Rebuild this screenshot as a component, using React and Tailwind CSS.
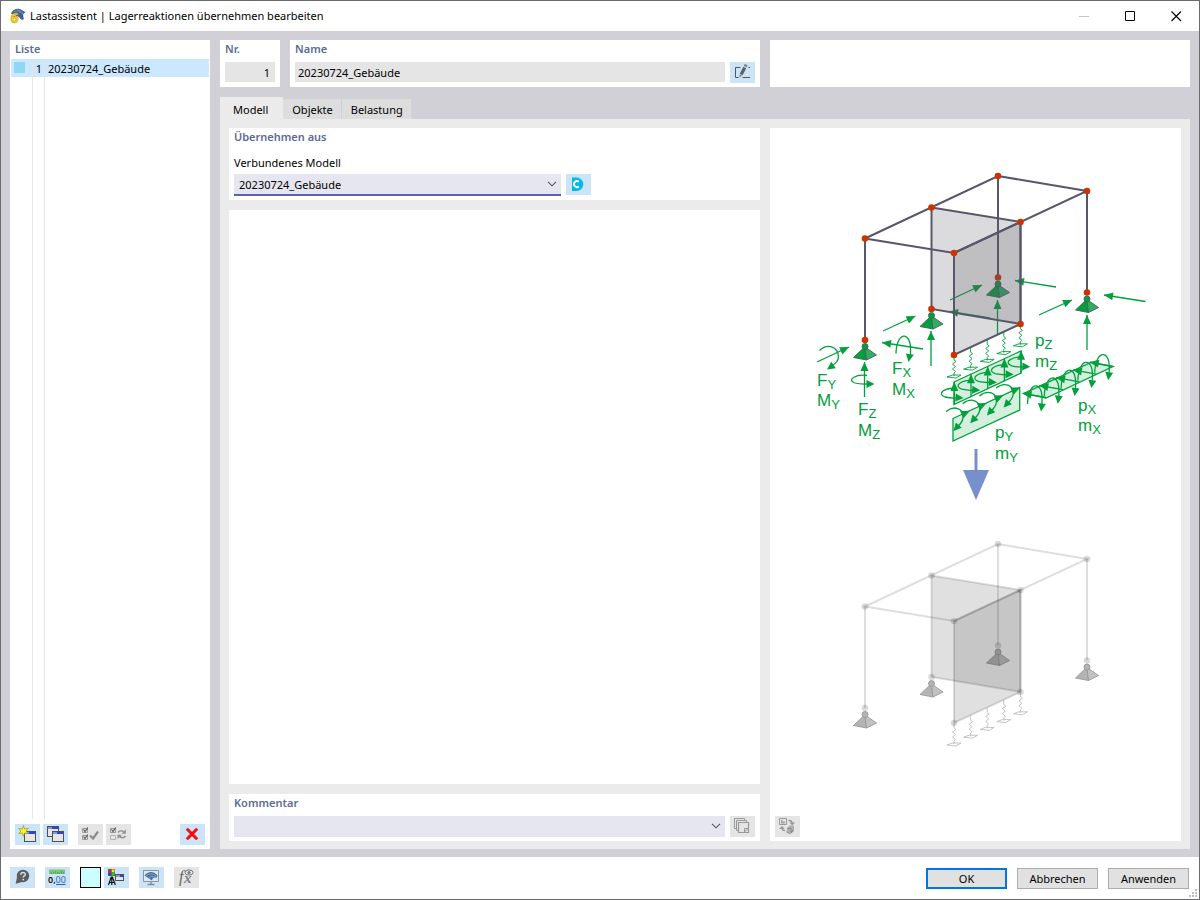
import { useState } from "react";
import clsx from "clsx";

const GREEN = "#00a03c";

/* ---------- small controls ---------- */

function ToolButton({ label, disabled, children }) {
  return (
    <button
      type="button"
      aria-label={label}
      disabled={disabled}
      className={clsx("block h-[21px] w-[25px] shrink-0", disabled ? "bg-[#e5e5e5]" : "bg-[#cce4f7]")}
    >
      <svg viewBox="0 0 25 21" className="h-[21px] w-[25px] overflow-visible" fill="none">
        {children}
      </svg>
    </button>
  );
}

function Caption({ htmlFor, children }) {
  const cls = "block text-[11px] leading-[18px] font-semibold text-[#5c6b94]";
  return htmlFor ? <label htmlFor={htmlFor} className={cls}>{children}</label> : <h2 className={cls}>{children}</h2>;
}

function Chevron() {
  return (
    <svg viewBox="0 0 10 6" className="pointer-events-none absolute top-[7px] right-[4px] h-[6px] w-[10px]" fill="none" stroke="#555" strokeWidth="1.1">
      <path d="M1 .8 5 4.800 9 .8" />
    </svg>
  );
}

function DialogButton({ primary, children }) {
  return (
    <button
      type="button"
      className={clsx("h-[21px] w-[81px] bg-[#e1e1e1] text-[11px] leading-none", primary ? "border-2 border-[#0078d7]" : "border border-[#adadad]")}
    >
      {children}
    </button>
  );
}

/* ---------- icons ---------- */

function MiniWindow({ x, y, w = 11, h = 11 }) {
  return (
    <g transform={`translate(${x} ${y})`}>
      <rect x=".5" y=".5" width={w - 1} height={h - 1} fill="#e6e6e6" stroke="#505050" />
      <path d={`M1 2H${w - 1}`} stroke="#2c3fe0" strokeWidth="2" />
      <path d="M1 2H5" stroke="#7d9ccb" strokeWidth="2" />
    </g>
  );
}

const NewIcon = () => (
  <>
    <MiniWindow x={9} y={7} w={12} />
    <path d="M8.500 1.500 9.600 5l3.700-.6L11 7l2.400 2.600-3.700-.6-1.200 3.300L7.200 9l-3.400.6L6 7 3.700 4.400l3.700.6Z" fill="#fff21a" stroke="#8a8430" strokeWidth=".6" />
  </>
);

const CopyIcon = () => (
  <>
    <MiniWindow x={4} y={2} w={12} />
    <MiniWindow x={9} y={7} w={12} />
  </>
);

const CheckAllIcon = () => (
  <>
    <path d="M4.500 4.500h5v4h-5zM4.500 11.500h5v4h-5z" stroke="#9a9a9a" />
    <path d="m5.500 5.500 1.500 2L9.800 3.500M5.500 12.500l1.500 2 2.800-4" stroke="#555" strokeWidth="1.100" />
    <path d="m12 11.500 3 3 5-7" stroke="#8c8c8c" strokeWidth="2.200" />
  </>
);

const InvertIcon = () => (
  <>
    <path d="M4.500 4.500h5v4h-5z" stroke="#9a9a9a" />
    <path d="M4.500 11.500h5v4h-5z" stroke="#b4b4b4" />
    <path d="m5.500 5.500 1.500 2L9.800 3.500" stroke="#555" strokeWidth="1.100" />
    <path d="M12 8.500c1.500-2 4-2 6-.5M19.500 12c-1.500 2-4 2-6 .5" stroke="#909090" strokeWidth="1.600" />
    <path d="M19.800 5.500v4.200h-4.300ZM11.500 15v-4.200h4.300Z" fill="#909090" />
  </>
);

const DeleteIcon = () => <path d="M6.800 4.800 17.200 15.200M17.200 4.800 6.800 15.200" stroke="#fa0a0a" strokeWidth="3" />;

const EditIcon = () => (
  <>
    <path d="M10.500 5.500h-5v10h3M12.500 15.500H20M18.500 5.500H20" stroke="#555" />
    <path d="m14.800 5.500-3.600 7" stroke="#606060" strokeWidth="3.200" />
    <path d="m15.300 4.500.9-1.800" stroke="#777" strokeWidth="3.200" />
    <path d="m9.600 12.200 2.600 1.300-2.900 2.300Z" fill="#888" />
  </>
);

const CloudIcon = () => (
  <>
    <path d="M6 3.500h4.500a6.700 6.700 0 0 1 0 13.500H6Z" fill="#00b9e4" />
    <path d="M12.800 7.700a3 3 0 1 0 0 4.800" stroke="#fff" strokeWidth="2" />
  </>
);

const PagesIcon = () => (
  <g stroke="#999">
    <path d="M4.500 12.500v-10h10M6.500 14.500v-10h10" />
    <path d="M4.500 12.500h2M6.500 14.500h2M14.500 2.500v2M16.500 4.500v2" />
    <path d="M8.500 6.500h10v10h-10z" strokeWidth="1.200" />
    <path d="M14.500 16v-3.500H18M14.500 16l3.500-3.500" />
  </g>
);

const SwapIcon = () => (
  <>
    <path d="M4.500 2.500h7v6h-7z" stroke="#999" />
    <path d="M6 4h1.500v1.500H10V7.500H6Z" fill="#a5a5a5" />
    <path d="M13.500 4.500c2.500 0 4 .5 3.500 3.500M7 11c-.5 2.500 1 3.500 3 3.500" stroke="#999" strokeWidth="1.400" />
    <path d="M14.500 6.500h5.500L17.200 9.500ZM4.200 13 7 10l2.800 3Z" fill="#999" />
    <path d="m12 12 2.500-2.500h4.500v4.500l-2.500 3.500-5-1.500Z" fill="#b0b0b0" />
    <path d="m12.500 12.500 3.500-.5v4l2.500-2.500M11.500 16l3 1.500 4-2.500" stroke="#8c8c8c" />
  </>
);

const HelpIcon = () => (
  <>
    <circle cx="13" cy="9" r="6.200" fill="#5c5c5c" />
    <path d="m7 10-1.300 6.700L12 15Z" fill="#5c5c5c" />
    <path d="M10.800 7.700c0-3 4.700-2.800 4.500-.2-.1 1.400-2.100 1.500-2.100 3" stroke="#cce4f7" strokeWidth="1.500" />
    <circle cx="13.200" cy="12.600" r=".9" fill="#cce4f7" />
  </>
);

const UnitsIcon = () => (
  <>
    <path d="M4 2.500h16v4.500H4Z" fill="#7cc47a" />
    <path d="M6.500 7V5M8.500 7V5M10.500 7V4M12.500 7V5M14.500 7V5M16.500 7V4M18.500 7V5" stroke="#4e9e52" strokeWidth=".7" />
    <text x="3" y="16" fontSize="9" fontWeight="600" fill="#111">0,</text>
    <text x="10.500" y="16" fontSize="9" fill="#2f62bd">00</text>
    <path d="M11 17.500h9.500" stroke="#2f62bd" />
  </>
);

const DisplayIcon = () => (
  <>
    <path d="M4 2h7v7H4z" fill="#666" />
    <path d="M4.500 2.500h2.700v2.700H4.500z" fill="#f01818" />
    <path d="M7.800 2.500h2.700v2.700H7.800z" fill="#ffe600" />
    <path d="M4.500 5.800h2.700v2.700H4.500z" fill="#2838e0" />
    <path d="M7.800 5.800h2.700v2.700H7.800z" fill="#25c52b" />
    <path d="M4.500 18 7.200 10h1.200l3 8M5 15.500h6M7.800 10v8" stroke="#111" strokeWidth="1.200" />
    <MiniWindow x={11} y={7} w={9} h={7} />
  </>
);

const MonitorIcon = () => (
  <>
    <path d="M4.500 3.500h15v11h-15z" stroke="#8f959b" fill="#dce9f3" />
    <path d="M12 15v2.500M8.500 17.500h7" stroke="#848b92" strokeWidth="1.400" />
    <path d="M5.500 8.500C9 4 14.500 3.500 18.500 8.500L17.500 11c-2-1-4-.5-4.500 2.500Z" fill="#41749f" />
    <path d="M7 9c4-3 7-3 10.500.5M10 11c2-2 4-2 6.500-.5" stroke="#9fbad0" strokeWidth=".7" />
  </>
);

const FormulaIcon = () => (
  <>
    <text x="5" y="15" fontSize="16" fontStyle="italic" fontFamily="Liberation Serif, serif" fill="#666">f</text>
    <text x="10" y="16" fontSize="15" fontStyle="italic" fontWeight="700" fontFamily="Liberation Serif, serif" fill="#808080">x</text>
    <ellipse cx="15" cy="5.500" rx="4" ry="2.600" stroke="#777" />
    <circle cx="15" cy="5.500" r="1.500" fill="#777" />
  </>
);

const AppIcon = () => (
  <svg viewBox="0 0 16 16" className="size-4 overflow-visible" aria-hidden="true">
    <path d="M2 5.500C3.500 2 8-.5 12 1.500l4.500 2.800-2.500 2 .8 5C13 12.500 11 11 10 9Z" fill="#41628e" />
    <path d="M5 4c3-2 5.500-2 8.500.5M8 1.500c2 2 4 3.500 6.500 4.500" stroke="#8ba5c4" strokeWidth=".7" fill="none" />
    <text x="1.500" y="15" fontSize="14" fontWeight="800" fill="#f6cf1c" stroke="#9a861e" strokeWidth=".4">6</text>
  </svg>
);

/* ---------- illustration ---------- */

const NODES = [[865, 238.500], [931.500, 207.500], [998, 176], [1087, 191], [1020.500, 222], [954, 253]];
const FEET = [[865, 340], [931.500, 309], [998, 277.500], [1087, 292.500], [1020.500, 324], [954, 355]];
const STEPS = [0, 1, 2, 3, 4];

const FULL = {
  line: "#57566a", plate: "#5c5a66", plateOpacity: 0.22, node: "#cc3300", nodeOpacity: 1,
  face: "#00a03f", faceLight: "#2fae62", outline: "#4e5a5c", spring: GREEN, lineOpacity: 1, width: 2,
};
const GHOST = {
  line: "#000", plate: "#3d3d3d", plateOpacity: 0.16, node: "#000", nodeOpacity: 0.14,
  face: "#b4b4b4", faceLight: "#c2c2c2", outline: "#9a9a9a", spring: "#bdbdbd", lineOpacity: 0.13, width: 2,
};

function Support({ x, y, c }) {
  return (
    <g transform={`translate(${x} ${y})`} stroke={c.outline} strokeWidth=".9" strokeLinejoin="round">
      <path d="M-1.500 8-11.500 17.500 1.500 20 0 8Z" fill={c.face} />
      <path d="M0 8 1.500 20 11.500 15 1.500 8Z" fill={c.faceLight} />
      <circle cy="6.500" r="3" fill={c.face} />
    </g>
  );
}

function Spring({ x, y, c }) {
  return (
    <path
      transform={`translate(${x} ${y})`}
      d="M0 0V5L2 6.500-1.500 9 1.500 11.500-1.500 14 1.500 16.500 0 18V21M-7 22-1.500 20H7L2 23Z"
      fill="none"
      stroke={c.spring}
      strokeWidth=".9"
    />
  );
}

function Plate({ points, c }) {
  return <polygon points={points.join(" ")} fill={c.plate} fillOpacity={c.plateOpacity} />;
}

function Structure({ c, behind }) {
  const [n0, n1, n2, n3, n4, n5] = NODES;
  const [f0, f1, f2, f3, f4, f5] = FEET;
  return (
    <g>
      <path d={`M${n2}L${f2}`} stroke={c.line} strokeOpacity={c.lineOpacity} strokeWidth={c.width} />
      <Support x={f2[0]} y={f2[1]} c={c} />
      <circle cx={f2[0]} cy={f2[1]} r="3.300" fill={c.node} fillOpacity={c.nodeOpacity} />
      {behind}
      <Plate points={[n1, n4, f4, f1]} c={c} />
      <Plate points={[n5, n4, f4, f5]} c={c} />
      <g stroke={c.line} strokeOpacity={c.lineOpacity} strokeWidth={c.width} fill="none">
        <path d={`M${n0}L${n2}L${n3}L${n5}Z`} />
        <path d={`M${n0}L${f0}M${n3}L${f3}`} />
        <path d={`M${n1}L${n4}L${f4}L${f1}Z`} />
        <path d={`M${n5}L${n4}L${f4}L${f5}Z`} />
      </g>
      {STEPS.map((i) => <Spring key={i} x={954 + i * 16.6} y={355 - i * 7.8} c={c} />)}
      {[...NODES, f0, f1, f3, f4, f5].map(([x, y], i) => (
        <circle key={i} cx={x} cy={y} r="3.300" fill={c.node} fillOpacity={c.nodeOpacity} />
      ))}
      {[f0, f1, f3].map(([x, y]) => <Support key={x} x={x} y={y} c={c} />)}
    </g>
  );
}

function Head({ x, y, angle, size = 9 }) {
  return <path transform={`translate(${x} ${y}) rotate(${angle})`} d={`M0 0L${-size} -4V4Z`} fill={GREEN} />;
}

function Arrow({ from, to, size }) {
  const angle = (Math.atan2(to[1] - from[1], to[0] - from[0]) * 180) / Math.PI;
  return (
    <g>
      <path d={`M${from}L${to}`} stroke={GREEN} strokeWidth="1.300" />
      <Head x={to[0]} y={to[1]} angle={angle} size={size} />
    </g>
  );
}

function Turn({ d, x, y, angle }) {
  return (
    <g>
      <path d={d} fill="none" stroke={GREEN} strokeWidth="1.300" />
      <Head x={x} y={y} angle={angle} size={8} />
    </g>
  );
}

function Label({ x, y, base, sub }) {
  return (
    <text x={x} y={y} fontSize="17" fill={GREEN} fontFamily="Liberation Sans, Arial, sans-serif">
      {base}
      <tspan fontSize="13" dy="3">{sub}</tspan>
    </text>
  );
}

function Loads() {
  return (
    <g>
      <Arrow from={[1039, 315]} to={[1072, 300]} />
      <Arrow from={[1145.500, 301.500]} to={[1104, 295]} />
      <Arrow from={[1087, 350]} to={[1087, 315]} />
      <Arrow from={[883, 331]} to={[915.500, 316]} />
      <Arrow from={[931, 366]} to={[931, 331]} />
      <Arrow from={[817, 362]} to={[849, 347]} />
      <Arrow from={[923, 349]} to={[882, 342.500]} />
      <Arrow from={[864.500, 397]} to={[864.500, 362]} />
      <Turn d="M819.500 350.500C827 343 838 346 838.500 357Q838 362 833 365" x={827} y={369.500} angle={145} />
      <Turn d="M896 353.500C896.500 331 911 331 910.500 350V355" x={908.500} y={362} angle={100} />
      <Turn d="M867 375.500C856 374 846 380 855 383Q860 384.500 868 384" x={874.500} y={384} angle={0} />

      {/* vertical line load */}
      <path d="M954 382 1021 351V373L954 404.500Z" fill={GREEN} fillOpacity=".17" stroke={GREEN} strokeWidth="1.300" />
      {STEPS.map((i) => (
        <g key={i} transform={`translate(${i * 16.7} ${i * -7.8})`}>
          <Arrow from={[954.300, 404.500]} to={[954.300, 382]} />
          <Turn d="M957 388.500C945 387 936 394 945 397Q951 398.500 957 398" x={963.500} y={398} angle={3} />
        </g>
      ))}

      {/* line load in y */}
      <path d="M953 418.500 1019.700 387.500V410L953 441Z" fill={GREEN} fillOpacity=".17" stroke={GREEN} strokeWidth="1.300" />
      {[0, 1, 2, 3].map((i) => (
        <g key={i} transform={`translate(${i * 16.7} ${i * -7.8})`}>
          <Head x={970} y={410.800} angle={-25} />
          <Turn d="M946 411.500C954 405 964 408 963 418Q962 423 958 426" x={953.500} y={431} angle={132} />
        </g>
      ))}

      {/* line load in x */}
      <path d="M1024 393.300 1046 398 1113 366.500 1091 362.500Z" fill={GREEN} fillOpacity=".17" stroke={GREEN} strokeWidth="1.300" />
      {STEPS.map((i) => (
        <g key={i} transform={`translate(${i * 16.8} ${i * -7.8})`}>
          <Arrow from={[1046, 397.500]} to={[1022.500, 393.300]} />
          <Turn d="M1027.500 404C1028 381 1043 380 1042 400V404" x={1041} y={411.500} angle={97} />
        </g>
      ))}

      <Label x={817} y={386} base="F" sub="Y" />
      <Label x={817} y={406} base="M" sub="Y" />
      <Label x={858} y={415} base="F" sub="Z" />
      <Label x={858} y={436} base="M" sub="Z" />
      <Label x={892} y={374} base="F" sub="X" />
      <Label x={892} y={395} base="M" sub="X" />
      <Label x={1035} y={346} base="p" sub="Z" />
      <Label x={1035} y={367} base="m" sub="Z" />
      <Label x={1078} y={411} base="p" sub="X" />
      <Label x={1078} y={431} base="m" sub="X" />
      <Label x={995} y={438} base="p" sub="Y" />
      <Label x={995} y={459} base="m" sub="Y" />
    </g>
  );
}

function Illustration() {
  const hiddenLoads = (
    <g>
      <Arrow from={[950, 300]} to={[982, 285]} />
      <Arrow from={[1056, 287]} to={[1015, 280.500]} />
      <Arrow from={[997.500, 334]} to={[997.500, 300]} />
      <Arrow from={[990, 318]} to={[949, 311.500]} />
    </g>
  );
  return (
    <svg viewBox="770 128 411 680" className="block w-full" role="img" aria-label="Lagerreaktionen">
      <Structure c={FULL} behind={hiddenLoads} />
      <Loads />
      <path d="M976 449V472" stroke="#7590cb" strokeWidth="3" />
      <path d="M963 470H989L976 500Z" fill="#7590cb" />
      <g transform="translate(0 368)">
        <Structure c={GHOST} />
      </g>
    </svg>
  );
}

/* ---------- dialog ---------- */

const TABS = ["Modell", "Objekte", "Belastung"];
const ENTRIES = [{ no: 1, name: "20230724_Gebäude" }];

function TitleBar() {
  return (
    <header className="flex h-[30px] items-center bg-white pl-2">
      <AppIcon />
      <h1 className="ml-[5px] flex-1 text-[11px]">Lastassistent | Lagerreaktionen übernehmen bearbeiten</h1>
      <div className="flex">
        <button type="button" aria-label="Minimieren" disabled className="flex h-[30px] w-[46px] items-center justify-center">
          <svg viewBox="0 0 11 11" className="size-[11px]"><path d="M0 5.500H10" stroke="#c4c4c4" /></svg>
        </button>
        <button type="button" aria-label="Maximieren" className="flex h-[30px] w-[46px] items-center justify-center">
          <svg viewBox="0 0 11 11" className="size-[11px]" fill="none"><path d="M.5 .5h9v9h-9z" stroke="#000" /></svg>
        </button>
        <button type="button" aria-label="Schließen" className="flex h-[30px] w-[46px] items-center justify-center">
          <svg viewBox="0 0 11 11" className="size-[11px]"><path d="M.5 .5 10 10M10 .5 .5 10" stroke="#000" strokeWidth="1.100" /></svg>
        </button>
      </div>
    </header>
  );
}

function ListPanel() {
  return (
    <aside className="flex w-[200px] shrink-0 flex-col bg-white">
      <div className="px-[5px] pb-px"><Caption>Liste</Caption></div>
      <ul className="px-px">
        {ENTRIES.map((entry) => (
          <li key={entry.no} className="grid h-[18px] grid-cols-[22px_12px_1fr] bg-[#cce8ff] text-[11px] leading-[20px]">
            <span className="border-r border-[#e4e4e4] py-[3px] pl-[3px]">
              <span className="block size-[11px] bg-[#8fd8f5]" />
            </span>
            <span className="border-r border-[#e4e4e4] pr-[2px] text-right">{entry.no}</span>
            <span className="pl-[3px]">{entry.name}</span>
          </li>
        ))}
      </ul>
      <div className="mx-px grid flex-1 grid-cols-[22px_12px_1fr]">
        <span className="border-r border-[#e8e8e8]" />
        <span className="border-r border-[#e8e8e8]" />
      </div>
      <div className="flex px-[5px] pt-[5px] pb-1">
        <div className="flex gap-[3px]">
          <ToolButton label="Neu"><NewIcon /></ToolButton>
          <ToolButton label="Kopieren"><CopyIcon /></ToolButton>
        </div>
        <div className="ml-[10px] flex gap-[3px]">
          <ToolButton label="Alle auswählen" disabled><CheckAllIcon /></ToolButton>
          <ToolButton label="Auswahl umkehren" disabled><InvertIcon /></ToolButton>
        </div>
        <div className="ml-auto"><ToolButton label="Löschen"><DeleteIcon /></ToolButton></div>
      </div>
    </aside>
  );
}

function HeaderFields() {
  return (
    <div className="grid grid-cols-[540fr_420fr] gap-[10px]">
      <div className="flex gap-[10px]">
        <div className="w-[60px] bg-white px-[5px] pb-[5px]">
          <Caption htmlFor="nr">Nr.</Caption>
          <input id="nr" readOnly value="1" className="mt-1 block h-5 w-full bg-[#e5e5e5] pt-px pr-[5px] text-right text-[11px] outline-none" />
        </div>
        <div className="flex-1 bg-white px-[5px] pb-1">
          <Caption htmlFor="name">Name</Caption>
          <div className="mt-1 flex gap-[5px]">
            <input id="name" readOnly value="20230724_Gebäude" className="block h-5 min-w-0 flex-1 bg-[#e5e5e5] pt-px pl-[3px] text-[11px] outline-none" />
            <ToolButton label="Name bearbeiten"><EditIcon /></ToolButton>
          </div>
        </div>
      </div>
      <div className="bg-white" />
    </div>
  );
}

function ModelTab() {
  return (
    <div className="grid flex-1 grid-cols-[531fr_411fr] gap-[10px] bg-[#ebebeb] px-[9px] pt-[9px] pb-2">
      <div className="flex flex-col gap-[10px]">
        <section className="bg-white px-[5px] pb-1">
          <Caption>Übernehmen aus</Caption>
          <label htmlFor="model" className="mt-2 block text-[11px] leading-[18px]">Verbundenes Modell</label>
          <div className="mt-[2px] flex gap-[5px]">
            <div className="relative w-[327px]">
              <select id="model" defaultValue="20230724_Gebäude" className="block h-[22px] w-full appearance-none border-b-2 border-[#5f62a6] bg-[#e6e6f1] pt-[2px] pl-[5px] text-[11px] outline-none">
                <option>20230724_Gebäude</option>
              </select>
              <Chevron />
            </div>
            <ToolButton label="Modell verbinden"><CloudIcon /></ToolButton>
          </div>
        </section>
        <section className="flex-1 bg-white" />
        <section className="bg-white px-[5px] pb-1">
          <Caption htmlFor="comment">Kommentar</Caption>
          <div className="mt-1 flex gap-[5px]">
            <div className="relative flex-1">
              <select id="comment" className="block h-[21px] w-full appearance-none bg-[#e6e6f1] pl-[5px] text-[11px] outline-none">
                <option></option>
              </select>
              <Chevron />
            </div>
            <ToolButton label="Kommentare" disabled><PagesIcon /></ToolButton>
          </div>
        </section>
      </div>
      <section className="flex flex-col justify-between bg-white">
        <Illustration />
        <div className="px-[5px] pb-1">
          <ToolButton label="Grafik wechseln" disabled><SwapIcon /></ToolButton>
        </div>
      </section>
    </div>
  );
}

function Footer() {
  return (
    <footer className="relative flex h-[42px] items-start justify-between bg-white pt-[10px] pr-[10px] pl-[9px]">
      <div className="flex gap-[10px]">
        <ToolButton label="Hilfe"><HelpIcon /></ToolButton>
        <ToolButton label="Einheiten"><UnitsIcon /></ToolButton>
        <div className="flex gap-[3px]">
          <button type="button" aria-label="Farbe" className="size-[21px] border border-black bg-[#ccffff]" />
          <ToolButton label="Anzeige"><DisplayIcon /></ToolButton>
        </div>
        <ToolButton label="Ansicht"><MonitorIcon /></ToolButton>
        <ToolButton label="Formel" disabled><FormulaIcon /></ToolButton>
      </div>
      <div className="flex gap-[10px] pt-px">
        <DialogButton primary>OK</DialogButton>
        <DialogButton>Abbrechen</DialogButton>
        <DialogButton>Anwenden</DialogButton>
      </div>
      <svg viewBox="0 0 8 8" className="absolute right-[2px] bottom-[2px] size-2" fill="#bfbfbf" aria-hidden="true">
        <path d="M6 0h2v2H6zM3 3h2v2H3zM6 3h2v2H6zM0 6h2v2H0zM3 6h2v2H3zM6 6h2v2H6z" />
      </svg>
    </footer>
  );
}

export default function App() {
  const [tab, setTab] = useState("Modell");

  return (
    <div className="flex min-h-screen flex-col border border-[#6b6b6e] bg-[#d1d0d6] font-['Noto_Sans','Open_Sans',sans-serif] text-black">
      <TitleBar />
      <main className="flex flex-1 gap-[10px] px-[9px] pt-[9px] pb-2">
        <ListPanel />
        <div className="flex min-w-0 flex-1 flex-col">
          <HeaderFields />
          <div role="tablist" className="mt-[10px] flex items-end">
            {TABS.map((t) => (
              <button
                key={t}
                type="button"
                role="tab"
                aria-selected={tab === t}
                onClick={() => setTab(t)}
                className={clsx(
                  "text-[11px]",
                  tab === t
                    ? "h-[22px] bg-[#ebebeb] pt-1 pr-[15px] pl-[13px]"
                    : "h-5 border-r border-[#d1d0d6] bg-[#dddddd] pt-[2px] pr-2 pl-[9px]"
                )}
              >
                {t}
              </button>
            ))}
          </div>
          <ModelTab />
        </div>
      </main>
      <Footer />
    </div>
  );
}
